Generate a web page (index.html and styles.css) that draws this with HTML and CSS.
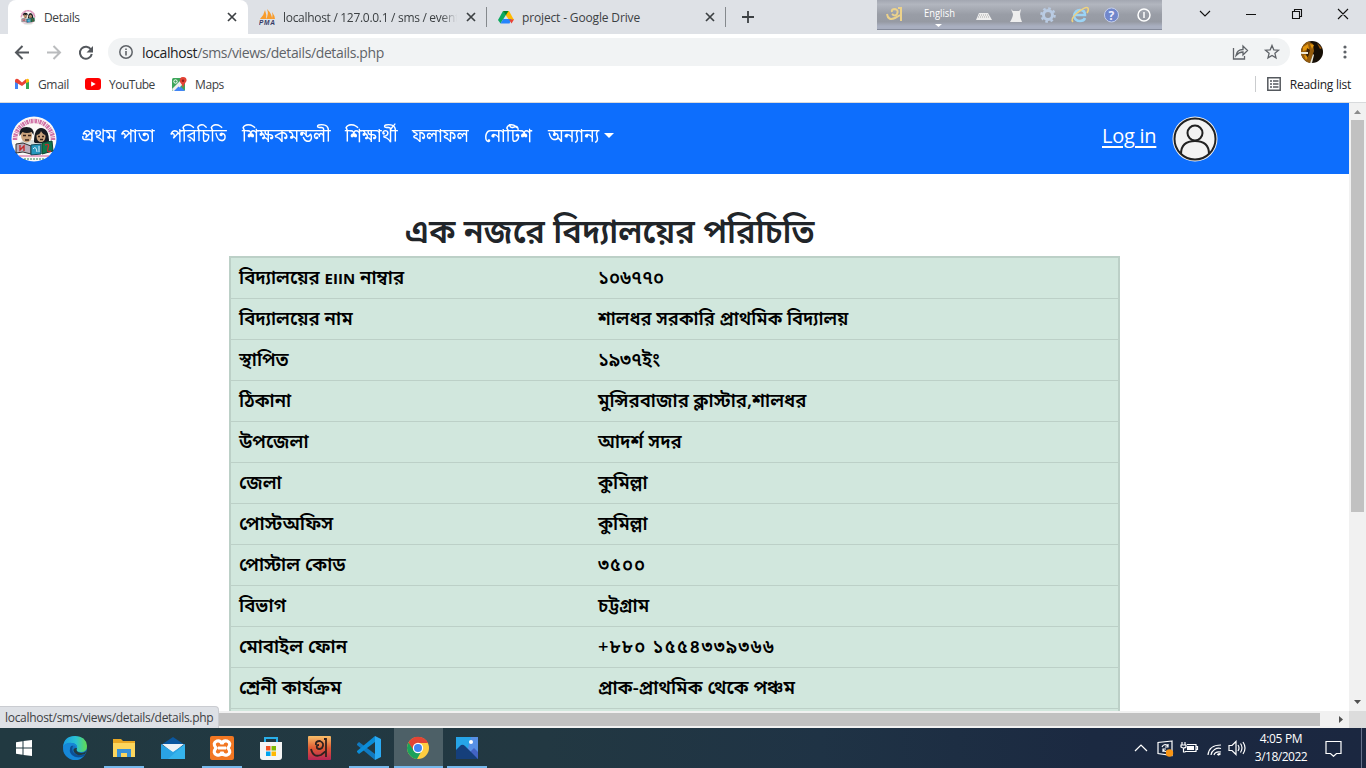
FILE: index.html
```html
<!DOCTYPE html>
<html lang="bn">
<head>
<meta charset="utf-8">
<title>Details</title>
<link rel="stylesheet" href="styles.css">
</head>
<body>
<div class="tabs">
  <div class="tab active">
    <svg class="fav" viewBox="0 0 46 46"><use href="#school"/></svg><span class="tt t1">Details</span>
    <svg class="x" viewBox="0 0 10 10"><path d="M1 1l8 8M9 1L1 9"/></svg>
  </div>
  <div class="tab second">
    <svg class="fav" viewBox="0 0 16 16"><path d="M1 10Q5 6 6 1q2 5 1 9zM7 10q3-5 1-10 5 5 5 10zM13 10q1-4 0-7 3 4 3 7z" fill="#f89c2c"/><text x="0" y="15.7" class="pma" textLength="16">PMA</text></svg>
    <span class="tt t2">localhost / 127.0.0.1 / sms / event</span>
    <svg class="x" viewBox="0 0 10 10"><path d="M1 1l8 8M9 1L1 9"/></svg>
  </div>
  <div class="tab third">
    <svg class="fav" viewBox="0 0 16 16"><path d="M5 2h6l5 9h-5z" fill="#ffba00"/><path d="M5 2L0 11l2.500 3.500L8.200 5.500z" fill="#0da960"/><path d="M2.500 14.500L5.200 10h8.300l-2 4.500z" fill="#2684fc"/><path d="M5 2h5.500L8 6z" fill="#00832d"/><path d="M11 10.500h5l-2.500 4z" fill="#ea4335"/></svg>
    <span class="tt t3">project - Google Drive</span>
    <svg class="x" viewBox="0 0 10 10"><path d="M1 1l8 8M9 1L1 9"/></svg>
  </div>
  <svg class="plus" viewBox="0 0 12 12"><path d="M6 0v12M0 6h12"/></svg>
  <div class="ime">
    <svg width="285" height="30" viewBox="0 0 285 30">
      <g fill="none" stroke="#ecd28b" stroke-width="2"><path d="M15 12q-1-3 3-3 4 1 2 5-2 3-5 0M10 14q1 7 8 4l5-3M21 8h3v13"/></g>
      <text x="47" y="17" class="imet" textLength="31" lengthAdjust="spacingAndGlyphs">English</text><path d="M58 24h7l-3.500 3z" fill="#fff"/>
      <path d="M102 13h9l4 7H99z" fill="#eee"/><path d="M102 15h10M101 17h12" stroke="#aaa" stroke-dasharray="1 1"/>
      <path d="M134 9l2 5q0 3-3 8h12q-2-5-2-8l1-5-2 2h-6z" fill="#eee"/>
      <circle cx="171" cy="15" r="4.500" fill="none" stroke="#b9cbe3" stroke-width="3"/><circle cx="171" cy="15" r="6.600" fill="none" stroke="#b9cbe3" stroke-width="2.400" stroke-dasharray="2.600 2.580"/>
      <path d="M198 15h10q0-5-5-5t-6 6q1 5 6 5 4 0 5-3" fill="none" stroke="#9bd4f5" stroke-width="2.500"/><path d="M196 22q-3-3 4-9 9-7 11-5 1 2-1 5" fill="none" stroke="#efd27e" stroke-width="1.500"/>
      <circle cx="234.500" cy="15" r="7" fill="#7187cb" stroke="#c5cfec"/><text x="231.500" y="19.500" class="qm">?</text>
      <circle cx="267" cy="15" r="6" fill="none" stroke="#fff" stroke-width="1.500"/><path d="M267 12v6" stroke="#fff" stroke-width="1.500"/>
    </svg>
  </div>
  <svg class="wc" width="160" height="28" viewBox="0 0 160 28"><path d="M5 11l5 5 5-5M51 14.500h10M97.500 11.500h7v7h-7zM99.500 11.500v-2h7v7h-2M143 9l10 10M153 9l-10 10" fill="none" stroke="#111" stroke-width="1.100"/></svg>
</div>
<div class="toolbar">
  <svg class="navs" width="108" height="34" viewBox="0 0 108 34"><g fill="none" stroke-width="2"><path d="M29 17.500H16M22.500 11L16 17.500l6.500 6.500" stroke="#54585d"/><path d="M47 17.500h13M53.500 11l6.500 6.500-6.500 6.500" stroke="#babcbe"/><path d="M91 14.500a6 6 0 1 0 .8 4.500" stroke="#54585d"/></g><path d="M93 11v6.500h-6.500z" fill="#54585d"/></svg>
  <div class="omni">
    <svg width="14" height="14" viewBox="0 0 14 14"><circle cx="7" cy="7" r="6.200" fill="none" stroke="#5f6368" stroke-width="1.500"/><path d="M7 6v4.500M7 3.500V5" stroke="#5f6368" stroke-width="1.600"/></svg>
    <span class="url"><b>localhost</b>/sms/views/details/details.php</span>
    <svg class="acts" width="50" height="18" viewBox="0 0 50 18"><g fill="none" stroke="#5f6368" stroke-width="1.300"><path d="M1.500 5v11h11V13M4 12.500q1-6 7-6V3l4.500 4.500-4.500 4.500v-3q-4 0-7 3.500z"/><path d="M40 2.500l1.800 4.300 4.700.4-3.600 3.100 1.100 4.600-4-2.400-4 2.400 1.100-4.600-3.600-3.100 4.700-.4z"/></g></svg>
  </div>
  <svg class="avatar" width="22" height="22" viewBox="0 0 22 22"><defs><clipPath id="av"><circle cx="11" cy="11" r="11"/></clipPath></defs><g clip-path="url(#av)"><rect width="22" height="22" fill="#160e05"/><path d="M0 3l7-3 5 3 1 7-4 12H0z" fill="#965c0c"/><path d="M2 6l5-3 1 5-6 2zM3 14l5 1-3 4zM9 3l4 1-2 4z" fill="#e3960e"/><path d="M6 7l3 2-2 8-2-3z" fill="#3b2106"/><path d="M0 11h7v2H0zM12 13l1 1-2 8H9z" fill="#eee8d7"/><path d="M16 2l5 5-2 1z" fill="#9b590d"/></g></svg>
  <svg class="dots" width="4" height="14" viewBox="0 0 4 14"><g fill="#5f6368"><circle cx="2" cy="2" r="1.600"/><circle cx="2" cy="7" r="1.600"/><circle cx="2" cy="12" r="1.600"/></g></svg>
</div>
<div class="bookmarks">
  <svg class="gm" width="14" height="12" viewBox="0 0 14 12"><path d="M0 2v9h3V4z" fill="#4285f4"/><path d="M11 4v7h3V2z" fill="#34a853"/><path d="M11 5V1.500Q13 0 14 2v2z" fill="#fbbc04"/><path d="M0 3Q0 0 3 1l4 3.500L11 1v4L7 8 0 4z" fill="#ea4335"/></svg><span class="b1">Gmail</span>
  <svg class="yt" width="16" height="12" viewBox="0 0 16 12"><rect width="16" height="12" rx="3" fill="#f00"/><path d="M6.200 3.500v5l4.500-2.500z" fill="#fff"/></svg><span class="b2">YouTube</span>
  <svg class="mp" width="15" height="15" viewBox="0 0 15 15"><rect y="1" width="13" height="13" rx="1.500" fill="#3ca55a"/><path d="M1 14l6-6 6 6z" fill="#4285f4"/><path d="M0 12L10 2l3 3-9 9H1z" fill="#eee"/><path d="M2 14l4.500-4.500L11 14z" fill="#4285f4"/><circle cx="3.500" cy="4.500" r="1.700" fill="none" stroke="#fff"/><path d="M11 11Q10 7 8 5q-1-5 3-5t3.500 4Q12 7 11 11" fill="#e34235"/><circle cx="11" cy="3.700" r="1.200" fill="#8a1f18"/></svg><span class="b3">Maps</span>
  <div class="rl"><svg width="14" height="14" viewBox="0 0 14 14"><path d="M.8.800h12.400v12.400H.8zM3 4h2M6 4h5.500M3 7h2M6 7h5.500M3 10h2M6 10h5.500" fill="none" stroke="#54585d" stroke-width="1.500"/></svg><span>Reading list</span></div>
</div>
<div class="frame">
  <div class="page">
    <div class="navbar">
      <svg class="logo" width="46" height="46" viewBox="0 0 46 46">
        <g id="school"><circle cx="23" cy="23" r="22.500" fill="#fbf9f7"/><path d="M4 24a19 19 0 0 1 38 0" fill="none" stroke="#d070a5" stroke-width="4.500" stroke-dasharray="2 .8 1 .6"/>
        <path d="M7 31q2-7 8-7h15q9 0 10 8l-6 4H10z" fill="#d9dedc"/>
        <ellipse cx="15.500" cy="19.500" rx="5.500" ry="7" fill="#c9a27c"/><path d="M8.500 20q-1-9 7-9t7 8l-2-3q-5 2-9 0z" fill="#171a20"/>
        <path d="M23 26q0-14 7-14 8 0 8 14l-4 1H24z" fill="#171a20"/><ellipse cx="30" cy="20.500" rx="4.500" ry="5.500" fill="#c9a27c"/><path d="M25 19q4 0 5-4 2 4 5 4-1-6-5-6t-5 6" fill="#171a20"/>
        <path d="M12 19.500h3M17 19.500h3M27 20.500h2M31 20.500h2M14 24h4M29 23.500h3" stroke="#352018" stroke-width="1.400"/>
        <path d="M5 28l7-1 8 3v8l-8-2-7 1z" fill="#b9adbb" stroke="#333"/><path d="M20 29l10-1v10l-10 1z" fill="#2798bd" stroke="#145"/><path d="M31 27l10-2 1 10-11 3z" fill="#10784b" stroke="#143"/><path d="M34 29q5-2 3 3t3 3M9 29v5l4-4v5" fill="none" stroke="#c22a2a" stroke-width="1.400"/><path d="M22 33q3-4 4 3M28 30v6" fill="none" stroke="#def"/><path d="M8 40h30" stroke="#ce5b99"/><path d="M13 43h20" stroke="#298657" stroke-dasharray="2 1"/></g>
      </svg>
      <div class="links"><a class="n1">প্রথম পাতা</a><a class="n2">পরিচিতি</a><a class="n3">শিক্ষকমন্ডলী</a><a class="n4">শিক্ষার্থী</a><a class="n5">ফলাফল</a><a class="n6">নোটিশ</a><a class="n7">অন্যান্য</a><i class="caret"></i></div>
      <a class="login">Log in</a>
      <svg class="user" width="46" height="46" viewBox="0 0 46 46"><circle cx="23" cy="23" r="22.500" fill="#f3f3f3"/><g fill="none" stroke="#222" stroke-width="2"><circle cx="23" cy="23" r="20.500"/><circle cx="23" cy="17" r="7.500"/><path d="M9 38q0-13 14-13t14 13"/></g></svg>
    </div>
    <h1><span>এক নজরে বিদ্যালয়ের পরিচিতি</span></h1>
    <div class="table">
      <div class="row"><span>বিদ্যালয়ের <b class="en">EIIN</b> নাম্বার</span><span>১০৬৭৭০</span></div>
      <div class="row"><span>বিদ্যালয়ের নাম</span><span>শালধর সরকারি প্রাথমিক বিদ্যালয়</span></div>
      <div class="row"><span>স্থাপিত</span><span>১৯৩৭ইং</span></div>
      <div class="row"><span>ঠিকানা</span><span class="wide">মুন্সিরবাজার ক্লাস্টার,শালধর</span></div>
      <div class="row"><span>উপজেলা</span><span class="wide">আদর্শ সদর</span></div>
      <div class="row"><span>জেলা</span><span class="wide">কুমিল্লা</span></div>
      <div class="row"><span class="wider">পোস্টঅফিস</span><span class="wide">কুমিল্লা</span></div>
      <div class="row"><span>পোস্টাল কোড</span><span class="zip">৩৫০০</span></div>
      <div class="row"><span>বিভাগ</span><span class="wide">চট্টগ্রাম</span></div>
      <div class="row"><span>মোবাইল ফোন</span><span class="phone">+৮৮০ ১৫৫৪৩৩৯৩৬৬</span></div>
      <div class="row"><span>শ্রেনী কার্যক্রম</span><span class="wide">প্রাক-প্রাথমিক থেকে পঞ্চম</span></div>
      <div class="row"></div>
    </div>
  </div>
  <div class="vs"><svg width="17" height="17" viewBox="0 0 17 17"><path d="M5 11h7L8.500 7z" fill="#8b8b8b"/></svg><div class="vthumb"></div><svg width="17" height="17" viewBox="0 0 17 17"><path d="M5 6h7l-3.500 4z" fill="#505050"/></svg></div>
</div>
<div class="hs"><div class="hthumb"></div><svg width="17" height="17" viewBox="0 0 17 17"><path d="M7 5v7l4-3.500z" fill="#505050"/></svg><div class="corner"></div><div class="status"><span>localhost/sms/views/details/details.php</span></div></div>
<div class="task">
  <div class="app start"><svg width="16" height="16" viewBox="0 0 16 16"><path d="M0 2.200L6.500 1.300v6.200H0zM7.500 1.100L16 0v7.500H7.500zM0 8.500h6.500v6.200L0 13.800zM7.500 8.500H16V16l-8.500-1.100z" fill="#fff"/></svg></div>
  <div class="app"><svg viewBox="0 0 24 24"><defs><linearGradient id="eg"><stop stop-color="#199be2"/><stop offset=".55" stop-color="#2bc3d2"/><stop offset="1" stop-color="#64da4c"/></linearGradient></defs><circle cx="12" cy="12" r="12" fill="#1275c2"/><path d="M0 11Q1 0 12 0q11 0 12 10 0 6-6 6-6 0-4-4 0-5-6-5-6 0-8 4" fill="url(#eg)"/><path d="M9 9q-4 5 0 10 5 5 12 1-4 5-11 4Q0 21 0 11q3-5 9-4 6 1 5 5-2-3-5-3" fill="#1687d7"/><path d="M8 10q-3 5 1 9 5 4 12 1l1-2q-6 3-11-1-3-3-1-7z" fill="#0c4f95"/><path d="M14 12q-2 4 4 5 4 0 6-3l-2 4q-8 3-11-2-2-4 3-4" fill="#213941"/></svg></div>
  <div class="app run"><svg viewBox="0 0 24 24"><path d="M1 3h8l2 2h12v16H1z" fill="#e9a824"/><path d="M1 7h22v14H1z" fill="#fcd65d"/><path d="M5 21v-8h14v8h-4v-4H9v4z" fill="#3891d8"/></svg></div>
  <div class="app"><svg viewBox="0 0 24 24"><path d="M0 9l12-8 12 8z" fill="#0b579f"/><path d="M1 8h22L12 17z" fill="#eef3f7"/><path d="M0 8l12 8 12-8v15H0z" fill="#2aa3e4"/><path d="M24 8v15H7z" fill="#3bb9f0" opacity=".7"/></svg></div>
  <div class="app run"><svg viewBox="0 0 24 24"><rect width="24" height="24" rx="2" fill="#f27722"/><path d="M7 5q4-1 5 3 1-4 5-3 5 2 1 7 4 5-1 7-4 1-5-3-1 4-5 3-5-2-1-7-4-5 1-7zM8 12h8" fill="none" stroke="#fff" stroke-width="3.200"/></svg></div>
  <div class="app"><svg viewBox="0 0 24 24"><path d="M6 7V2h12v5" fill="none" stroke="#29afe9" stroke-width="2"/><path d="M1 6h22v15q0 3-3 3H4q-3 0-3-3z" fill="#f5f5f5"/><path d="M7 10h4.500v4.500H7z" fill="#f15325"/><path d="M12.500 10H17v4.500h-4.500z" fill="#7fba00"/><path d="M7 15.500h4.500V20H7z" fill="#00a3ee"/><path d="M12.500 15.500H17V20h-4.500z" fill="#ffb900"/></svg></div>
  <div class="app"><svg viewBox="0 0 24 24"><defs><linearGradient id="ab" x2="0" y2="1"><stop stop-color="#f8be69"/><stop offset=".5" stop-color="#df5b33"/><stop offset="1" stop-color="#b82456"/></linearGradient></defs><rect width="23" height="24" rx="1" fill="url(#ab)"/><path d="M8 9q-1-4 4-4 5 2 2 7-3 2-5 0-1-3 2-3M3 13q2 9 10 6l5-4M16 3h2v18" fill="none" stroke="#30211f" stroke-width="1.800"/></svg></div>
  <div class="app run"><svg viewBox="0 0 24 24"><path d="M18 0l6 3v18l-6 3z" fill="#2aaaf3"/><path d="M0 8l2-2 16 12v6L0 9z" fill="#117ac0"/><path d="M0 16l2 2L18 6V0L0 15z" fill="#0b8dd8"/></svg></div>
  <div class="app cur"><svg viewBox="0 0 24 24"><circle cx="12" cy="12" r="11" fill="#ffcd40"/><path d="M2.500 6.500A11 11 0 0 1 22 7H12L7 15z" fill="#e24435"/><path d="M2.500 6.500L8 15l7 1-4 7A11 11 0 0 1 2.500 6.500" fill="#1ba15b"/><circle cx="12" cy="12" r="5.200" fill="#fff"/><circle cx="12" cy="12" r="4" fill="#4285f4"/></svg></div>
  <div class="app run"><svg viewBox="0 0 24 24"><path d="M1 1h22v22H1z" fill="#26a5e8"/><path d="M16 1h7v22H10z" fill="#5790e5"/><path d="M23 16l-4-4-4 4 8 7z" fill="#4263c4"/><path d="M1 14l5-5q2-1 4 1l13 13H1z" fill="#153f7b"/><circle cx="16" cy="6" r="2" fill="#fff"/></svg></div>
  <div class="tray">
    <svg width="112" height="24" viewBox="0 0 112 24"><g fill="none" stroke="#fff" stroke-width="1.200"><path d="M1 15l6-6 6 6M38 5l-14 1.500v11l14 2zM28 11q2-4 6-1M34 8v3h-3M34 14q-2 3-5 0M29 16v-3h3M48 6v3M51 6v3M47 9h5v2q-2 2-5 0zM49.500 12v4h2M53 8.500h9v7H51M62 10.500h1.500v3H62"/><path d="M77 19A8 8 0 0 1 87 12.500M74 19Q75 9 87 9M80 19q1-4 7-3"/><path d="M83.500 19q1-1 3-1" stroke-width="2"/><path d="M95 9.500h3l4-4v13l-4-4h-3zM104 9q2 3 0 6M106.500 7.500q3 4 0 9M109 6q4 6 0 12"/></g><path d="M53 10h7v4h-7z" fill="#fff"/><circle cx="35.500" cy="17" r="3.700" fill="#fb9614"/></svg>
    <div class="clock"><span class="c1">4:05 PM</span><span class="c2">3/18/2022</span></div>
    <svg class="note" width="17" height="17" viewBox="0 0 17 17"><path d="M1 1.500h15v12h-4.500l-3 2.800-3-2.800H1z" fill="none" stroke="#fff" stroke-width="1.200"/></svg>
    <i class="peek"></i>
  </div>
</div>
</body>
</html>
```

FILE: styles.css
```css
* { box-sizing: border-box; }
body { margin: 0; width: 1366px; height: 768px; overflow: hidden; background: #fff; font-family: "Open Sans", "Noto Sans", sans-serif; font-size: 12px; color: #3c4043; display: flex; flex-direction: column; }
svg { display: block; flex: none; }
span, a { white-space: nowrap; }
.tabs { height: 34px; background: #dee1e6; display: flex; flex: none; padding-left: 8px; }
.tab { display: flex; align-items: center; height: 34px; width: 240px; flex: none; padding-right: 11px; }
.tab.active { background: #fff; border-radius: 8px 8px 0 0; padding-left: 12px; }
.tab.second { padding-left: 11px; width: 239px; border-right: 1px solid #85898d; height: 20px; margin-top: 7px; padding-right: 10px; }
.tab.third { padding-left: 11px; width: 239px; border-right: 1px solid #85898d; height: 20px; margin-top: 7px; padding-right: 10px; }
.fav { width: 16px; height: 16px; margin-right: 8px; }
.tt { flex: 1; overflow: hidden; }
.t1 { letter-spacing: -.35px; }
.t2 { letter-spacing: -.3px; -webkit-mask-image: linear-gradient(90deg, #000 158px, transparent 174px); }
.t3 { letter-spacing: -.15px; }
.x { width: 10px; height: 10px; fill: none; stroke: #3c4043; stroke-width: 1.7; }
.pma { font: italic bold 6.5px "Liberation Sans", sans-serif; fill: #343a65; }
.plus { width: 12px; height: 12px; margin: 11px 0 0 16px; stroke: #3c4043; stroke-width: 1.8; }
.ime { width: 285px; height: 30px; margin-left: 123px; background: linear-gradient(#a3a7b1, #b2b6bf 15%, #999da6 50%, #969aa3 75%, #a9afc0 90%); border-bottom: 1px solid #858b9b; }
.imet { font-size: 10px; fill: #fff; }
.qm { font: bold 12px "Open Sans", sans-serif; fill: #eef; }
.wc { margin-left: 33px; }
.toolbar { height: 36px; flex: none; display: flex; align-items: center; }
.omni { width: 1182px; height: 28px; border-radius: 14px; background: #f1f3f4; display: flex; align-items: center; padding-left: 11px; }
.url { margin-left: 9px; font-size: 14px; color: #5f6368; letter-spacing: -.38px; }
.url b { font-weight: 400; color: #202124; }
.acts { margin-left: auto; margin-right: 8px; }
.avatar { margin-left: 11px; }
.dots { margin-left: 20px; }
.bookmarks { height: 33px; flex: none; border-bottom: 1px solid #d8dadc; display: flex; align-items: center; padding: 0 15px 4px 15px; }
.gm { margin-right: 9px; } .yt { margin: 0 8px 0 16px; } .mp { margin: 0 8px 0 17px; }
.b1 { letter-spacing: -.35px; width: 31px; } .b2 { width: 46px; letter-spacing: -.5px; } .b3 { letter-spacing: -.4px; }
.rl { margin-left: auto; border-left: 1px solid #caccce; height: 16px; display: flex; align-items: center; gap: 9px; padding-left: 11px; color: #202124; letter-spacing: -.25px; }
.frame { display: flex; height: 608px; flex: none; }
.page { width: 1349px; height: 608px; overflow: hidden; font-family: "Open Sans", "Noto Sans Bengali", sans-serif; }
.navbar { height: 71px; background: #0d6efd; color: #fff; display: flex; padding: 13px 0 0 11px; }
.links { display: flex; margin-left: 24px; width: 1021px; font-size: 19px; line-height: 38px; }
.links a { transform-origin: 0 50%; transform: scaleX(.93); }
.links .n1 { transform: scaleX(.915); }
.links .n2 { transform: scaleX(.89); }
.links .n5 { transform: scaleX(.88); }
.n1 { width: 89px; } .n2 { width: 72px; } .n3 { width: 103px; } .n4 { width: 67px; } .n5 { width: 72px; } .n6 { width: 64px; } .n7 { width: 55px; }
.caret { width: 0; height: 0; border: 5px solid transparent; border-top-color: #fff; border-bottom: 0; margin-top: 17px; margin-left: 1px; }
.login { font-size: 20px; line-height: 40px; text-decoration: underline; text-underline-offset: 3px; width: 70px; letter-spacing: -.25px; }
h1 { margin: 33px 0 3px; height: 46px; padding-left: 405px; line-height: 48px; font-size: 32.6px; font-weight: 600; color: #212529; }
.table { width: 891px; margin-left: 229px; border: 2px solid #bcd0c7; background: #d1e7dd; color: #000; font-weight: 600; font-size: 18.3px; }
.row { height: 41px; border-bottom: 1px solid #bcd0c7; display: grid; grid-template-columns: 359px 1fr; line-height: 38px; padding-left: 8px; }
.row span:first-child { font-size: 18.6px; }
.row .wide { font-size: 18.6px; }
.row span.wider { font-size: 19.2px; }
.row .en { font-size: 15px; font-weight: 700; }
.zip { letter-spacing: 1px; }
.phone { letter-spacing: 1.25px; }
.vs { width: 17px; background: #f1f1f1; display: flex; flex-direction: column; }
.vthumb { width: 13px; height: 392px; margin: 0 2px auto; background: #c1c1c1; }
.hs { height: 17px; flex: none; background: #f1f1f1; display: flex; position: relative; }
.hthumb { width: 1303px; height: 13px; margin: 2px 12px 0 17px; background: #c1c1c1; }
.corner { width: 17px; background: #dcdcdc; }
.status { position: absolute; left: 0; bottom: 0; width: 219px; height: 22px; background: #dee1e6; border-top: 1px solid #caccd1; border-right: 1px solid #caccd1; border-radius: 0 4px 0 0; padding-left: 5px; line-height: 21px; letter-spacing: -.3px; }
.task { height: 40px; flex: none; background: linear-gradient(90deg, #213941 0, #223842 40%, #1f3345 60%, #1b2941 80%, #1b2740); display: flex; }
.app { width: 49px; height: 40px; display: flex; align-items: center; justify-content: center; position: relative; padding-right: 1px; }
.app svg { width: 24px; height: 24px; }
.app.start { width: 51px; padding-right: 3px; }
.app.start svg { width: 16px; height: 16px; }
.app.run::after, .app.cur::after { content: ""; position: absolute; left: 4px; right: 5px; bottom: 0; height: 2px; background: #76b9ed; }
.app.cur { background: #4d6067; }
.app.cur::after { left: 0; right: 0; }
.tray { margin-left: auto; display: flex; align-items: center; color: #fff; height: 40px; }
.clock { width: 72px; margin-left: -1px; display: flex; flex-direction: column; align-items: center; line-height: 18px; padding-bottom: 1px; }
.c1 { letter-spacing: -.35px; } .c2 { letter-spacing: -.5px; }
.note { margin-left: 8px; }
.peek { width: 1px; height: 40px; background: #66718a; margin: 0 4px 0 19px; }
```
